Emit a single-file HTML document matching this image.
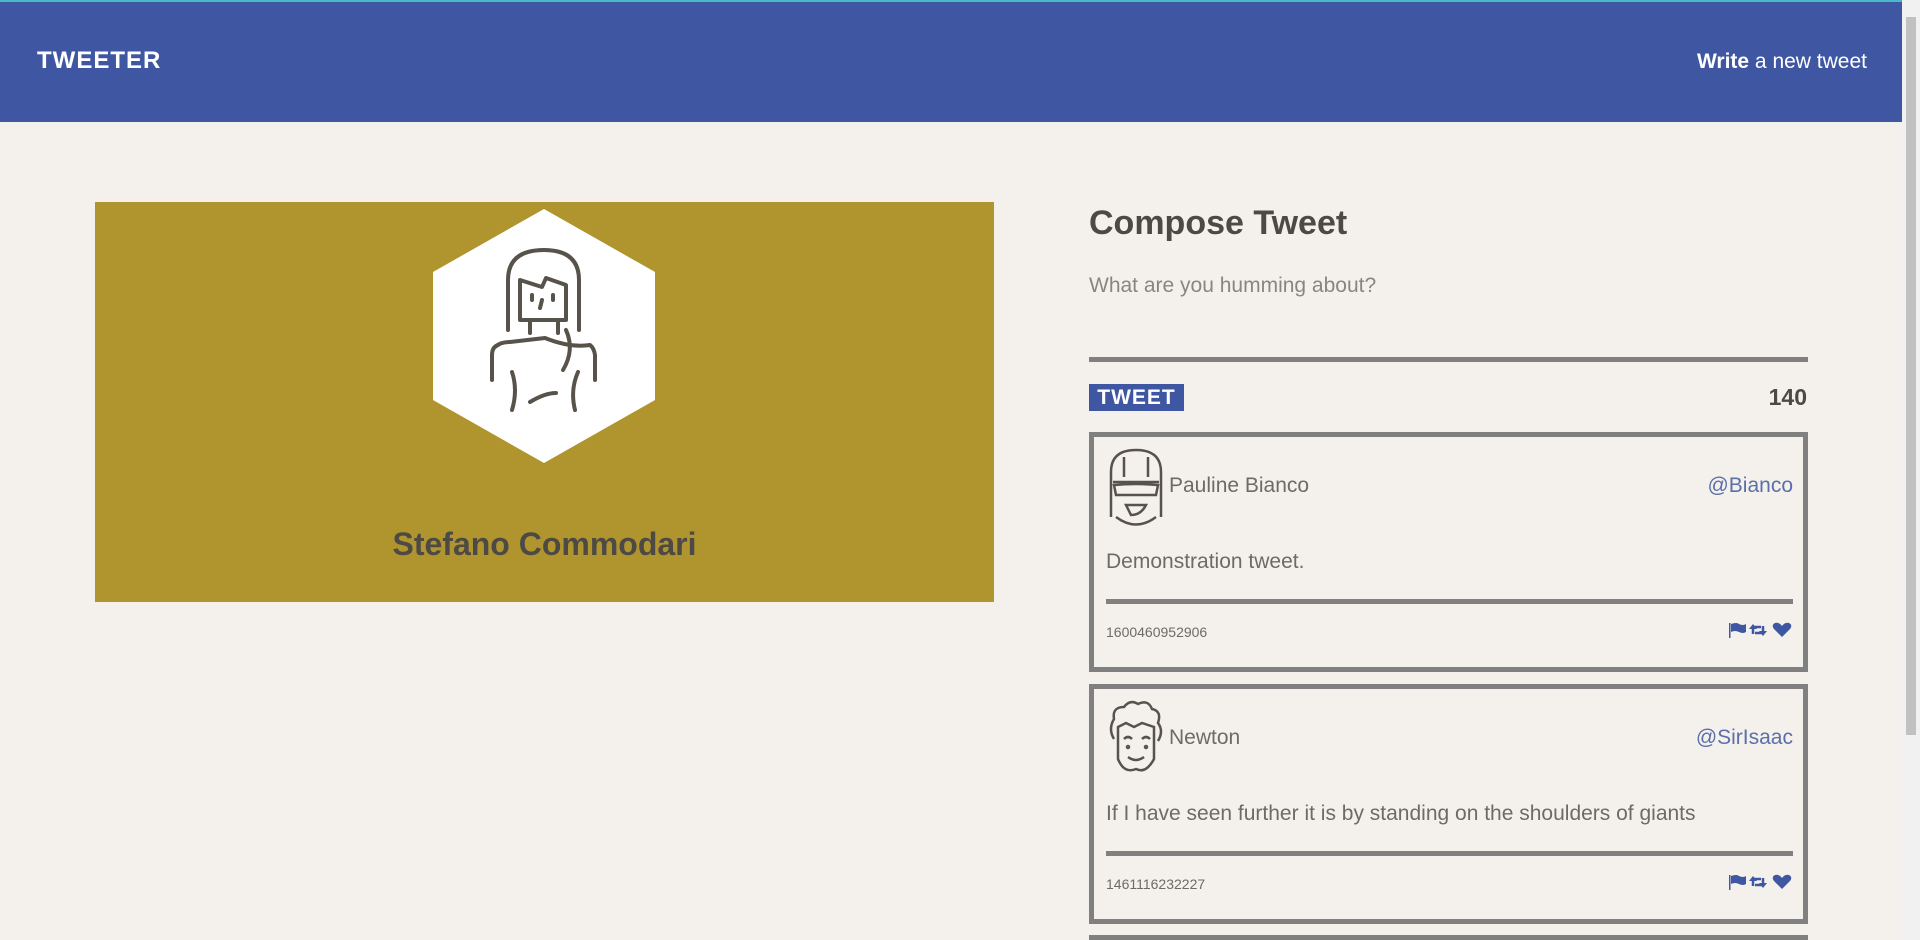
<!DOCTYPE html>
<html><head><meta charset="utf-8"><style>
*{margin:0;padding:0;box-sizing:border-box}
body{width:1920px;height:940px;overflow:hidden;background:#f4f1ed;font-family:"Liberation Sans",sans-serif;position:relative;color:#4d4a45}
.hdr{position:absolute;left:0;top:0;width:1902px;height:122px;background:#3f57a2;border-top:2px solid #47b8c8}
.logo{position:absolute;left:37px;top:45px;color:#fff;font-weight:900;font-size:24px;letter-spacing:1px}
.wr{position:absolute;right:35px;top:48px;color:#fff;font-size:21px}
.sb{position:absolute;right:0;top:0;width:18px;height:940px;background:#f1f1f1}
.sb i{position:absolute;left:4px;top:17px;width:10px;height:718px;background:#c1c1c1}
.card{position:absolute;left:95px;top:202px;width:899px;height:400px;background:#b0952f}
.name{position:absolute;left:95px;width:899px;top:526px;text-align:center;font-weight:bold;font-size:32px;color:#4d4a45}
.ct{position:absolute;left:1089px;top:204px;font-size:34px;font-weight:bold;color:#4d4a45}
.ph{position:absolute;left:1089px;top:274px;font-size:21px;color:#8a8580}
.ta{position:absolute;left:1089px;top:357px;width:719px;height:5px;background:#808080}
.btn{position:absolute;left:1089px;top:384px;width:95px;height:27px;background:#3f57a2;color:#fff;font-weight:900;font-size:21px;text-align:center;line-height:27px;letter-spacing:1px}
.cnt{position:absolute;left:1740px;top:384px;width:67px;text-align:right;font-weight:900;font-size:23px;color:#4d4a45}
.tw{position:absolute;left:1089px;width:719px;height:240px;border:5px solid #808080}
.tw .n{position:absolute;left:75px;top:37px;font-size:21px;color:#6e6a66}
.tw .h{position:absolute;right:10px;top:37px;font-size:21px;color:#5b6fa8}
.tw .c{position:absolute;left:12px;top:113px;font-size:21px;color:#6e6a66}
.tw .d{position:absolute;left:12px;right:10px;top:162px;height:5px;background:#808080}
.tw .t{position:absolute;left:12px;top:187px;font-size:14px;color:#6e6a66}
.tw .ic{position:absolute;right:10px;top:185px}
.tw .av{position:absolute;left:12px;top:10px}
</style></head><body>
<div class="hdr"><div class="logo">TWEETER</div><div class="wr"><b>Write</b> a new tweet</div></div>
<div class="sb"><i></i></div>
<div class="card"></div>
<svg style="position:absolute;left:0;top:0" width="1000" height="620">
<polygon points="544,209 655,272 655,400 544,463 433,400 433,272" fill="#fff"/>
<g fill="none" stroke="#57534b" stroke-width="4" stroke-linecap="round" stroke-linejoin="round">
<path d="M508,330 V280 Q508,250 544,250 Q579,250 579,280 V330"/>
<path d="M520,280 L542,287 L546,278 L566,285 V320 H520 Z"/>
<path d="M530,322 V333 M558,322 V333"/>
<path d="M566,330 Q575,350 563,370"/>
<path d="M495,347 Q500,342 510,342 L545,338 Q570,348 590,345 Q594,348 595,355 V380"/>
<path d="M492,380 V355 Q492,347 498,345"/>
<path d="M512,372 Q518,390 512,410 M578,372 Q570,390 575,410 M530,402 Q545,393 556,393"/>
<path d="M532,295 V300 M553,295 V300 M542,300 L540,308"/>
</g>
</svg>
<div class="name">Stefano Commodari</div>
<div class="ct">Compose Tweet</div>
<div class="ph">What are you humming about?</div>
<div class="ta"></div>
<div class="btn">TWEET</div>
<div class="cnt">140</div>

<div class="tw" style="top:432px">
<svg class="av" width="60" height="80" viewBox="0 0 60 80"><g fill="none" stroke="#57534b" stroke-width="2.5"><path d="M5,70 V25 Q5,3 30,3 Q55,3 55,25 V70"/><path d="M10,70 Q30,85 50,70"/><path d="M7,35 H53 M8,38 Q30,36 52,38 L50,48 H10 Z"/><path d="M18,10 V30 M42,10 V30"/><path d="M20,58 H40 Q35,68 25,68 Z"/></g></svg>
<div class="n">Pauline Bianco</div><div class="h">@Bianco</div>
<div class="c">Demonstration tweet.</div><div class="d"></div>
<div class="t">1600460952906</div>
<svg class="ic" width="64" height="16" viewBox="0 0 64 16"><g fill="#3f57a2"><rect x="0" y="1" width="1.5" height="15"/><path d="M2,2 Q8,0 10,2 Q14,4 17,2 V10 Q14,12 10,10 Q6,8 2,10Z"/><path d="M53,15 L45,7 Q42,3 46,1 Q50,0 53,4 Q56,0 60,1 Q64,3 61,7Z"/></g><g fill="none" stroke="#3f57a2" stroke-width="2.5"><path d="M24,12 V5 H32 M34,4 V11 H26"/></g><g fill="#3f57a2"><path d="M20,7 L24,2 L28,7Z M30,9 L34,14 L38,9Z"/></g></svg>
</div>

<div class="tw" style="top:684px">
<svg class="av" width="60" height="80" viewBox="0 0 60 80"><g fill="none" stroke="#57534b" stroke-width="2.5"><path d="M8,40 Q2,30 8,20 Q6,8 18,8 Q24,0 32,5 Q42,0 46,10 Q56,12 52,24 Q58,32 52,42"/><path d="M12,28 L20,24 L28,28 L36,24 L48,28 V60 Q40,75 30,70 Q18,75 12,60 Z"/><path d="M18,40 Q22,36 26,40 M36,40 Q40,36 44,40"/><path d="M22,58 Q30,64 38,58"/><circle cx="22" cy="48" r="1"/><circle cx="40" cy="48" r="1"/></g></svg>
<div class="n">Newton</div><div class="h">@SirIsaac</div>
<div class="c">If I have seen further it is by standing on the shoulders of giants</div><div class="d"></div>
<div class="t">1461116232227</div>
<svg class="ic" width="64" height="16" viewBox="0 0 64 16"><g fill="#3f57a2"><rect x="0" y="1" width="1.5" height="15"/><path d="M2,2 Q8,0 10,2 Q14,4 17,2 V10 Q14,12 10,10 Q6,8 2,10Z"/><path d="M53,15 L45,7 Q42,3 46,1 Q50,0 53,4 Q56,0 60,1 Q64,3 61,7Z"/></g><g fill="none" stroke="#3f57a2" stroke-width="2.5"><path d="M24,12 V5 H32 M34,4 V11 H26"/></g><g fill="#3f57a2"><path d="M20,7 L24,2 L28,7Z M30,9 L34,14 L38,9Z"/></g></svg>
</div>
<div style="position:absolute;left:1089px;top:935px;width:719px;height:5px;background:#808080"></div>
</body></html>
